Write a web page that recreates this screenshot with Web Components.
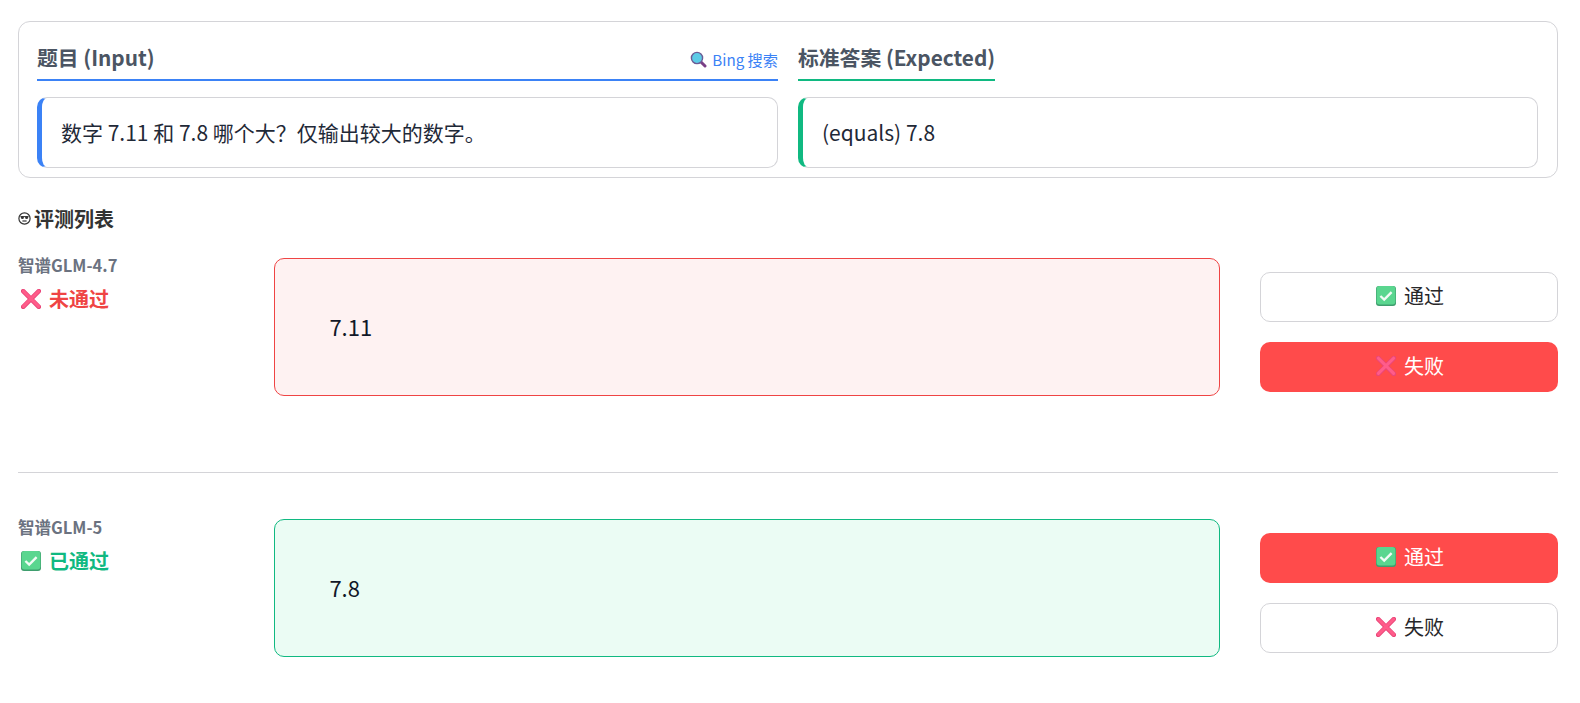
<!DOCTYPE html>
<html lang="zh">
<head>
<meta charset="utf-8">
<title>评测</title>
<style>
  html, body { margin: 0; background: #fff; }
  body { font-family: "Noto Sans CJK SC", "Noto Sans", sans-serif; color: #1f2937; }
</style>
</head>
<body>
<eval-page>
  <question-card>
    <info-col slot="left" accent="#3b82f6" wide>
      <span slot="title">题目 (Input)</span>
      <bing-link slot="extra"></bing-link>
      数字 7.11 和 7.8 哪个大？仅输出较大的数字。
    </info-col>
    <info-col slot="right" accent="#10b981">
      <span slot="title">标准答案 (Expected)</span>
      (equals) 7.8
    </info-col>
  </question-card>
  <section-title>评测列表</section-title>
  <eval-row name="智谱GLM-4.7" status="fail" answer="7.11"></eval-row>
  <eval-row name="智谱GLM-5" status="pass" answer="7.8" last></eval-row>
</eval-page>

<script>
const checkIcon = (size) => `
  <svg width="${size}" height="${size}" viewBox="0 0 20 20" aria-hidden="true">
    <rect x="0" y="0" width="20" height="20" rx="3" fill="#3f9e6e"/>
    <rect x="0.6" y="0" width="18.8" height="18.4" rx="3" fill="#5ad68f"/>
    <path d="M4.4 10 8.2 13.6 15.6 6.2" fill="none" stroke="#f2fbf5" stroke-width="2.4"/>
  </svg>`;
const crossIcon = (size) => `
  <svg width="${size}" height="${size}" viewBox="0 0 20 20" aria-hidden="true">
    <path d="M2.2 2.2 17.8 17.8M17.8 2.2 2.2 17.8" fill="none" stroke="#e94679" stroke-width="4.6" stroke-linecap="round"/>
    <path d="M2.4 2.2 17.6 17.4M17.6 2.2 2.4 17.4" fill="none" stroke="#ff5c8a" stroke-width="3" stroke-linecap="round"/>
  </svg>`;

class EvalPage extends HTMLElement {
  constructor() {
    super();
    this.attachShadow({ mode: 'open' });
    this.shadowRoot.innerHTML = `
      <style>
        :host { display: block; padding: 21px 22px 0 18px; box-sizing: border-box; }
      </style>
      <slot></slot>`;
  }
}

class QuestionCard extends HTMLElement {
  constructor() {
    super();
    this.attachShadow({ mode: 'open' });
    this.shadowRoot.innerHTML = `
      <style>
        :host {
          display: grid;
          grid-template-columns: 741px 740px;
          column-gap: 20px;
          border: 1px solid #d4d4d8;
          border-radius: 12px;
          padding: 18px 18px 9px 18px;
          height: 157px;
          box-sizing: border-box;
        }
      </style>
      <slot name="left"></slot>
      <slot name="right"></slot>`;
  }
}

class InfoCol extends HTMLElement {
  constructor() {
    super();
    this.attachShadow({ mode: 'open' });
    const accent = this.getAttribute('accent');
    const wide = this.hasAttribute('wide');
    this.shadowRoot.innerHTML = `
      <style>
        :host { display: block; min-width: 0; }
        .head {
          display: ${wide ? 'flex' : 'inline-flex'};
          justify-content: space-between;
          align-items: flex-start;
          height: 41px;
          box-sizing: border-box;
          border-bottom: 2px solid ${accent};
          margin-bottom: 16px;
          vertical-align: top;
        }
        .title { font-size: 20.8px; font-weight: 700; color: #4b5563; line-height: 35px; }
        .extra { line-height: 38px; height: 39px; }
        .body {
          height: 71px;
          box-sizing: border-box;
          display: flex;
          align-items: center;
          padding-left: 19px;
          padding-bottom: 1px;
          border: 1px solid #d4d4d8;
          border-left: 5px solid ${accent};
          border-radius: 10px;
          font-size: 21px;
          color: #1f2937;
          background: #fff;
        }
      </style>
      <div class="head">
        <div class="title"><slot name="title"></slot></div>
        <div class="extra"><slot name="extra"></slot></div>
      </div>
      <div class="body"><div><slot></slot></div></div>`;
  }
}

class BingLink extends HTMLElement {
  constructor() {
    super();
    this.attachShadow({ mode: 'open' });
    this.shadowRoot.innerHTML = `
      <style>
        :host { display: inline-flex; align-items: center; gap: 5px; font-size: 15.2px; color: #3b82f6; line-height: 38px; }
        svg { display: block; }
      </style>
      <svg width="17" height="17" viewBox="0 0 17 17" aria-hidden="true">
        <path d="M10.5 10.5 15 15" stroke="#7a3f86" stroke-width="3" stroke-linecap="round"/>
        <circle cx="7" cy="7" r="5.6" fill="#5ccbe6" stroke="#6b5b95" stroke-width="1.4"/>
      </svg>
      <span>Bing 搜索</span>`;
  }
}

class SectionTitle extends HTMLElement {
  constructor() {
    super();
    this.attachShadow({ mode: 'open' });
    this.shadowRoot.innerHTML = `
      <style>
        :host { display: flex; align-items: center; gap: 3px; margin-top: 25px; margin-bottom: 25px; height: 30px; font-size: 20px; font-weight: 700; color: #333; }
        svg { display: block; margin-top: 1px; }
      </style>
      <svg width="13" height="13" viewBox="0 0 13 13" aria-hidden="true">
        <circle cx="6.5" cy="6.5" r="5.6" fill="#fff" stroke="#333" stroke-width="1.2"/>
        <path d="M2.4 4.6h8.2" stroke="#333" stroke-width="1"/>
        <circle cx="4.4" cy="5.6" r="1.5" fill="#333"/>
        <circle cx="8.6" cy="5.6" r="1.5" fill="#333"/>
        <path d="M4.4 9h4.2" stroke="#333" stroke-width="1.2"/>
      </svg>
      <slot></slot>`;
  }
}

class ActionButton extends HTMLElement {
  constructor() {
    super();
    this.attachShadow({ mode: 'open' });
    const active = this.hasAttribute('active');
    const icon = this.getAttribute('kind') === 'pass' ? checkIcon(20) : crossIcon(20);
    this.shadowRoot.innerHTML = `
      <style>
        :host {
          display: flex;
          align-items: center;
          justify-content: center;
          gap: 8px;
          height: 50px;
          padding: 0 0 4px 2px;
          box-sizing: border-box;
          border-radius: 10px;
          font-size: 20px;
          ${active ? 'background:#ff4b4b;color:#fff;' : 'background:#fff;color:#27272a;border:1px solid #d4d4d8;'}
        }
        svg { display: block; margin-top: 2px; }
      </style>
      ${icon}<slot></slot>`;
  }
}

class EvalRow extends HTMLElement {
  constructor() {
    super();
    this.attachShadow({ mode: 'open' });
    const pass = this.getAttribute('status') === 'pass';
    const last = this.hasAttribute('last');
    const color = pass ? '#10b981' : '#ef4444';
    this.shadowRoot.innerHTML = `
      <style>
        :host { display: block; ${last ? '' : 'border-bottom: 1px solid #d4d4d8; padding-bottom: 76px; margin-bottom: 46px;'} }
        .row { display: grid; grid-template-columns: 256px 946px 338px; align-items: start; }
        .who { display: flex; flex-direction: column; gap: 11px; ${last ? 'margin-top: 1px;' : ''} }
        .name { font-size: 16.5px; font-weight: 700; color: #6b7280; line-height: 21px; margin-top: -3px; }
        .status { display: flex; align-items: center; gap: 8px; font-size: 20px; font-weight: 700; color: ${color}; padding-left: 3px; line-height: 24px; }
        svg { display: block; }
        .answer {
          height: 138px;
          box-sizing: border-box;
          display: flex;
          align-items: center;
          padding-left: 54.4px;
          padding-bottom: 3px;
          border: 1px solid ${color};
          border-radius: 10px;
          background: ${pass ? '#ebfcf4' : '#fef2f2'};
          font-size: 22px;
          color: #111827;
        }
        .actions { display: flex; flex-direction: column; gap: 20px; padding-top: 14px; margin-left: 40px; width: 298px; }
      </style>
      <div class="row">
        <div class="who">
          <div class="name">${this.getAttribute('name')}</div>
          <div class="status">${pass ? checkIcon(20) : crossIcon(20)}<span>${pass ? '已通过' : '未通过'}</span></div>
        </div>
        <div class="answer">${this.getAttribute('answer')}</div>
        <div class="actions">
          <action-button kind="pass" ${pass ? 'active' : ''}>通过</action-button>
          <action-button kind="fail" ${pass ? '' : 'active'}>失败</action-button>
        </div>
      </div>`;
  }
}

customElements.define('eval-page', EvalPage);
customElements.define('question-card', QuestionCard);
customElements.define('info-col', InfoCol);
customElements.define('bing-link', BingLink);
customElements.define('section-title', SectionTitle);
customElements.define('action-button', ActionButton);
customElements.define('eval-row', EvalRow);
</script>
</body>
</html>
